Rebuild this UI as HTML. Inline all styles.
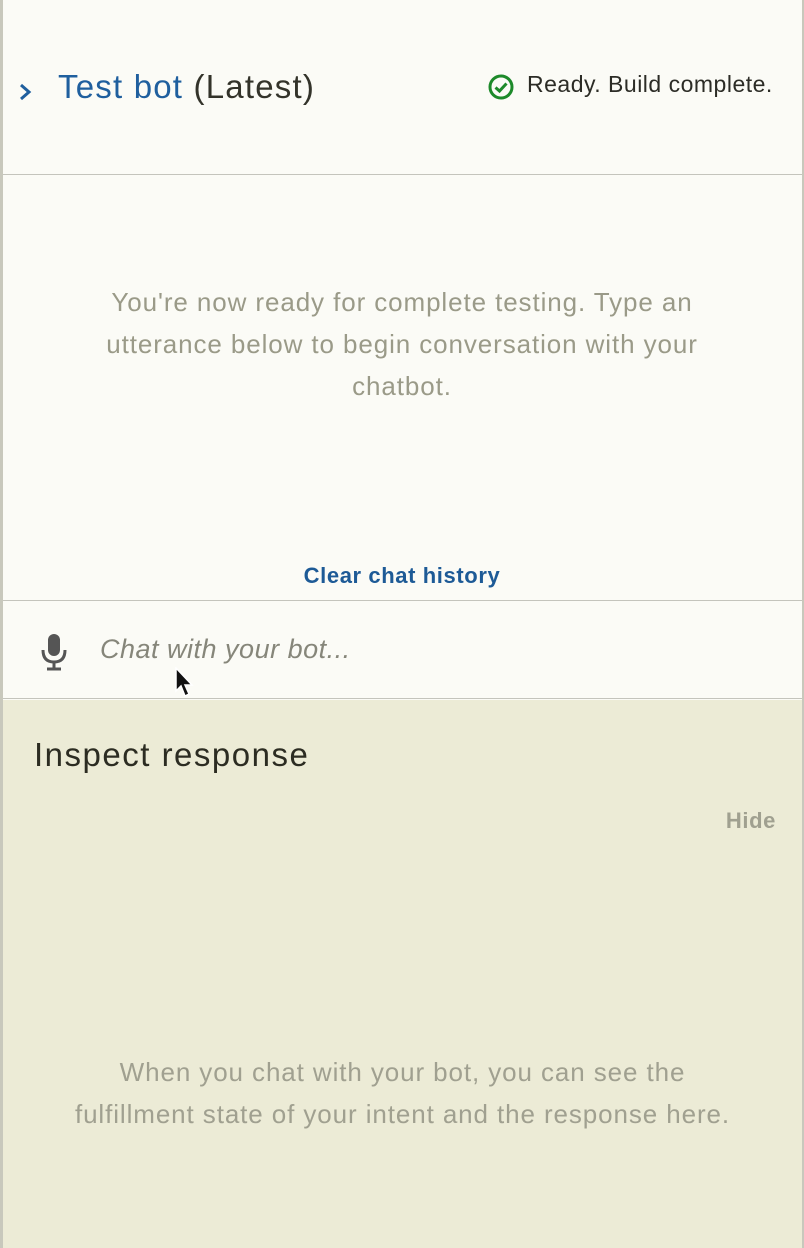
<!DOCTYPE html>
<html><head><meta charset="utf-8"><style>
*{margin:0;padding:0;box-sizing:border-box}
body{width:804px;height:1248px;overflow:hidden;font-family:"Liberation Sans",Arial,sans-serif;background:#fbfbf6;position:relative}
.frame{position:absolute;left:0;top:0;width:804px;height:1248px;border-left:3px solid #c8c8bc;border-right:2px solid #c8c8bc}
.hdr{position:absolute;left:0;top:0;width:804px;height:175px;border-bottom:1px solid #c4c4bc}
.t{position:absolute;left:58px;top:68px;font-size:33px;letter-spacing:1.2px;color:#1f5f9e}
.t span{color:#33332a}
.st{position:absolute;left:527px;top:71px;font-size:23px;letter-spacing:0.5px;color:#2c2c26}
.msg{position:absolute;left:20px;width:764px;top:281px;text-align:center;font-size:26px;letter-spacing:0.9px;line-height:42px;color:#9a9a88}
.clr{position:absolute;left:0;width:804px;top:563px;text-align:center;font-size:22px;letter-spacing:0.6px;font-weight:bold;color:#1d5a96}
.chat{position:absolute;left:0;top:600px;width:804px;height:99px;border-top:1px solid #c4c4bc;border-bottom:1px solid #c4c4bc}
.ph{position:absolute;left:100px;top:33px;font-size:27px;letter-spacing:0.5px;font-style:italic;color:#86867a}
.insp{position:absolute;left:3px;top:700px;width:799px;height:548px;background:#ecebd6}
.ih{position:absolute;left:31px;top:36px;font-size:33px;letter-spacing:1.5px;color:#2c2c22}
.hide{position:absolute;right:26px;top:108px;font-size:22px;letter-spacing:0.6px;font-weight:bold;color:#a0a090}
.im{position:absolute;left:0;width:799px;top:351px;text-align:center;font-size:26px;letter-spacing:0.9px;line-height:42px;color:#a0a090}
</style></head><body>
<div class="hdr">
<svg style="position:absolute;left:18px;top:82px" width="14" height="20" viewBox="0 0 14 20"><path d="M3 3 L11 10 L3 17" fill="none" stroke="#1f5f9e" stroke-width="3"/></svg>
<div class="t">Test bot <span>(Latest)</span></div>
<svg style="position:absolute;left:487px;top:73px" width="28" height="28" viewBox="0 0 28 28"><circle cx="14" cy="14" r="11" fill="none" stroke="#1d8a2a" stroke-width="3"/><path d="M8.5 14.5 L12.5 18 L19.5 10.5" fill="none" stroke="#1d8a2a" stroke-width="3"/></svg>
<div class="st">Ready. Build complete.</div>
</div>
<div class="msg">You're now ready for complete testing. Type an<br>utterance below to begin conversation with your<br>chatbot.</div>
<div class="clr">Clear chat history</div>
<div class="chat">
<svg style="position:absolute;left:40px;top:32px" width="28" height="38" viewBox="0 0 28 38"><rect x="8" y="1" width="12" height="22" rx="6" fill="#555"/><path d="M3 17 Q3 29 14 29 Q25 29 25 17" fill="none" stroke="#555" stroke-width="3"/><path d="M14 29 V35 M7 36 H21" stroke="#555" stroke-width="3"/></svg>
<div class="ph">Chat with your bot...</div>
<svg style="position:absolute;left:174px;top:66px" width="22" height="34" viewBox="0 0 22 34"><path d="M2 1 L2 24 L7 19 L11 29 L15 27 L11 18 L18 18 Z" fill="#111" stroke="#fff" stroke-width="1.5"/></svg>
</div>
<div class="insp">
<div class="ih">Inspect response</div>
<div class="hide">Hide</div>
<div class="im">When you chat with your bot, you can see the<br>fulfillment state of your intent and the response here.</div>
</div>
<div class="frame"></div>
</body></html>
